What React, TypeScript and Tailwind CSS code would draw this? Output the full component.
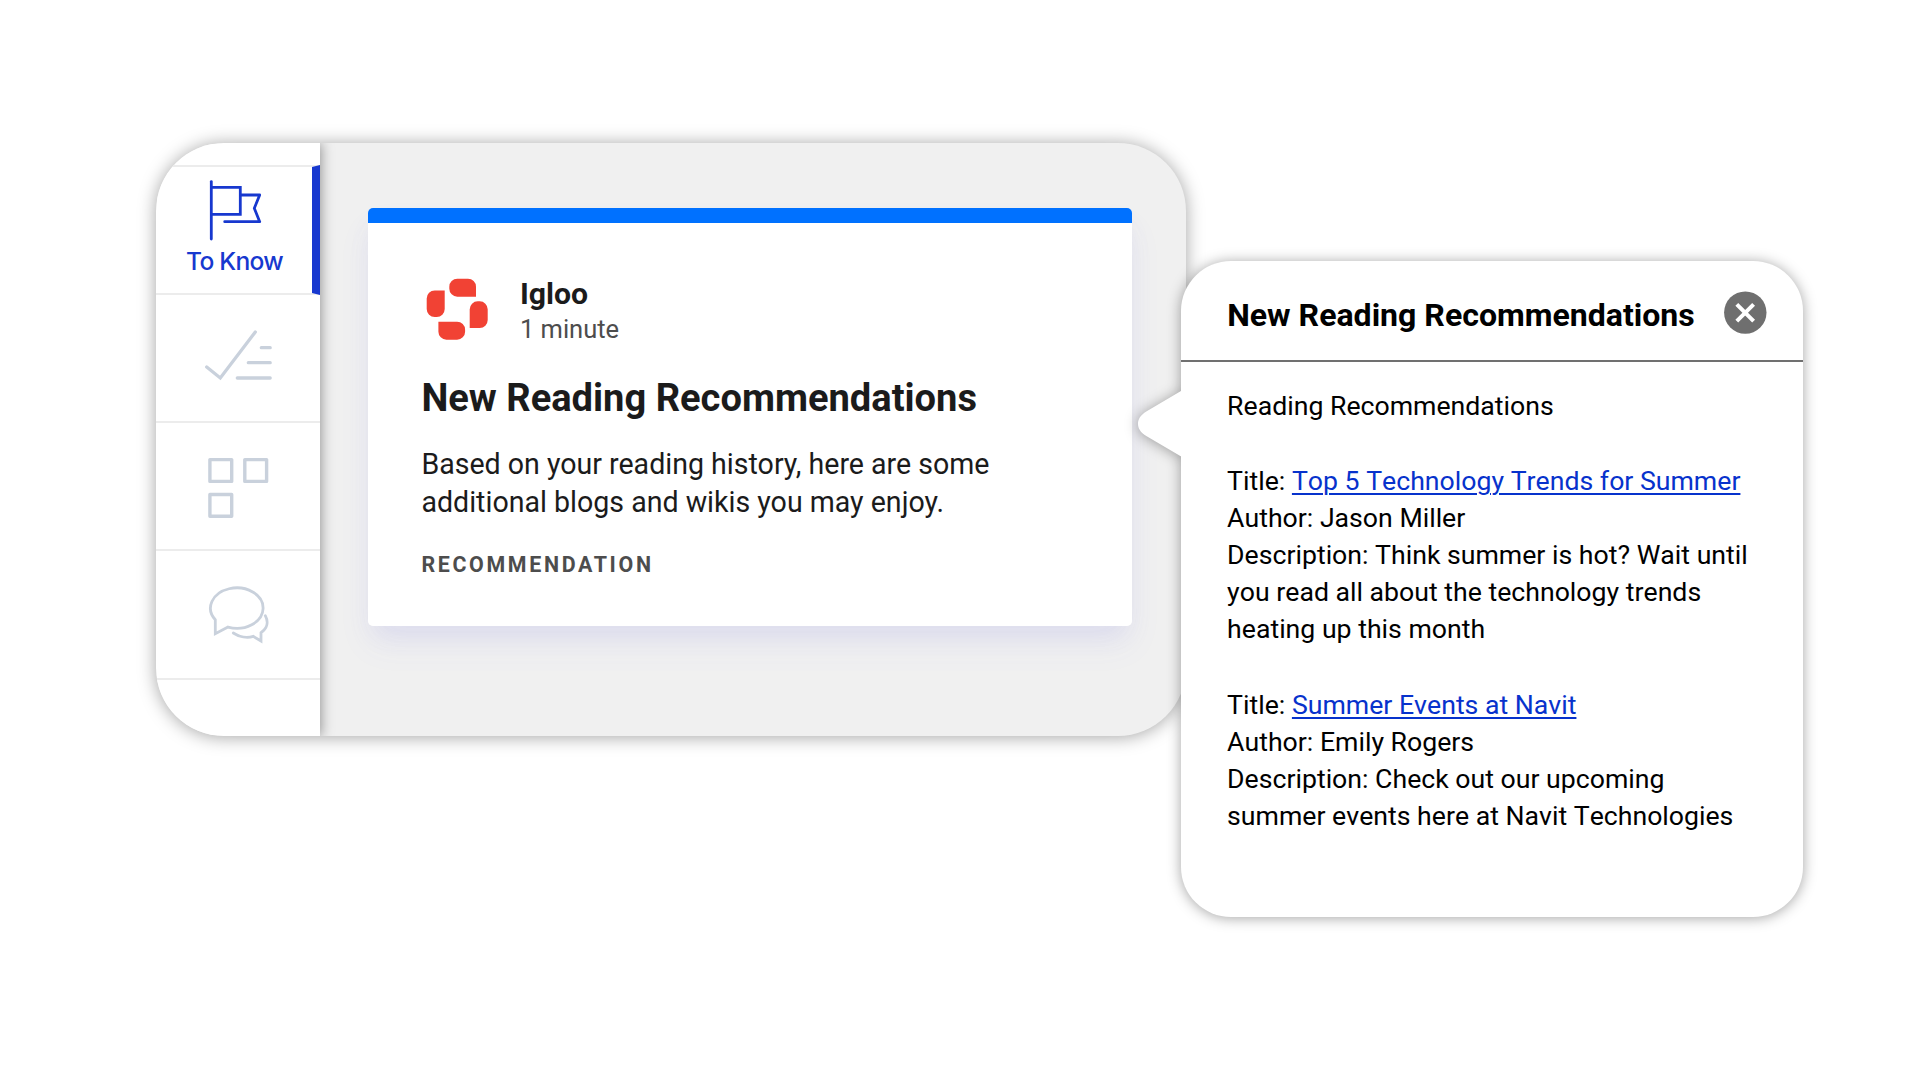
import type { ReactNode } from "react";

type TabProps = {
  children: ReactNode;
};

type RecommendationProps = {
  title: string;
  author: string;
  description: string;
};

const recommendations: RecommendationProps[] = [
  {
    title: "Top 5 Technology Trends for Summer",
    author: "Jason Miller",
    description:
      "Think summer is hot? Wait until you read all about the technology trends heating up this month",
  },
  {
    title: "Summer Events at Navit",
    author: "Emily Rogers",
    description: "Check out our upcoming summer events here at Navit Technologies",
  },
];

function FlagIcon() {
  return (
    <svg width="54" height="64" viewBox="0 0 54 64" fill="none" stroke="currentColor" strokeWidth="2.8" strokeLinecap="round">
      <path d="M3.3 3.6V61" />
      <path d="M3.3 9.3H32.3V36.3H3.3" />
      <path d="M32.3 17H51.7L46.3 30.3L51.7 43.7H16.7" strokeLinejoin="round" />
    </svg>
  );
}

function ChecklistIcon() {
  return (
    <svg width="68" height="68" viewBox="0 0 68 68" fill="none" stroke="currentColor" strokeWidth="3.3" strokeLinecap="round">
      <path d="M2.7 43L16.3 54L51.3 8" />
      <path d="M57.3 23.7H66.2M44.3 38.7H66.2M33.3 54H66.2" />
    </svg>
  );
}

function AppsIcon() {
  return (
    <svg width="68" height="68" viewBox="0 0 68 68" fill="none" stroke="currentColor" strokeWidth="3.4" strokeLinejoin="round">
      <rect x="5.9" y="7.6" width="21.8" height="21.8" />
      <rect x="40.8" y="7.6" width="21.8" height="21.8" />
      <rect x="5.9" y="42.5" width="21.8" height="21.8" />
    </svg>
  );
}

function ChatIcon() {
  return (
    <svg width="68" height="68" viewBox="0 0 68 68" fill="none" stroke="currentColor" strokeWidth="2.8" strokeLinecap="round">
      <path d="M11.3 38.7A26.3 20.2 0 1 1 24 46.1L11.3 52.7Z" />
      <path d="M61.3 34.7C64.7 41 63.3 47.4 57 51.7V60L49.3 55.4C43.3 57.4 35.3 56 29.3 52" />
    </svg>
  );
}

function IglooLogo() {
  const block =
    "M31.3 1.7H42A8 8 0 0 1 50 9.7V19.7H31.3A8 8 0 0 1 23.3 11.7V9.7A8 8 0 0 1 31.3 1.7Z";

  return (
    <svg width="62" height="64" viewBox="0 0 62 64" fill="#f14234">
      <path d={block} />
      <path d={block} transform="rotate(90 31.2 32.2)" />
      <path d={block} transform="rotate(180 31.2 32.2)" />
      <path d={block} transform="rotate(270 31.2 32.2)" />
    </svg>
  );
}

function Tab({ children }: TabProps) {
  return (
    <div className="flex h-32 items-center justify-center border-b-2 border-[#ececec] text-[#c9d1dc] last:h-[129px]">
      {children}
    </div>
  );
}

function Sidebar() {
  return (
    <div className="relative z-10 flex w-[164px] flex-col bg-white pt-[22px] shadow-[1px_0_12px_rgba(0,0,0,0.4)]">
      {/* Active tab, the thin top and bottom borders bevel the blue bar */}
      <div className="flex h-[130px] flex-col items-center border-y-2 border-r-8 border-[#ececec] border-r-[#1738cf] pt-[11px] pl-px text-[#1738cf]">
        <FlagIcon />
        <p className="mt-[3px] font-[Inter,sans-serif] text-[24.6px] leading-8 font-medium tracking-[-0.75px]">
          To Know
        </p>
      </div>
      <Tab>
        <ChecklistIcon />
      </Tab>
      <Tab>
        <AppsIcon />
      </Tab>
      <Tab>
        <ChatIcon />
      </Tab>
    </div>
  );
}

function Card() {
  return (
    <div className="h-[418px] w-[764px] overflow-hidden rounded-[5px] bg-white">
      <div className="h-[15px] bg-[#0071ff]" />
      <div className="pt-[53px] pl-[53.4px] text-[#1b1b1b]">
        <div className="flex">
          <div className="w-[98.5px] pt-px pl-[4.6px]">
            <IglooLogo />
          </div>
          <div>
            <p className="text-[30.2px] leading-9 font-bold">Igloo</p>
            <p className="text-[25.5px] leading-[34px] text-[#4d4d4d]">1 minute</p>
          </div>
        </div>
        <h1 className="mt-[29px] text-[38.1px] leading-[46px] font-bold">
          New Reading Recommendations
        </h1>
        <p className="mt-6 w-[600px] text-[28.57px] leading-[38px]">
          Based on your reading history, here are some additional blogs and wikis you may enjoy.
        </p>
        <p className="mt-[31px] text-[21.4px] leading-[26px] font-bold tracking-[2.65px] text-[#4d4d4d]">
          RECOMMENDATION
        </p>
      </div>
    </div>
  );
}

function Recommendation({ title, author, description }: RecommendationProps) {
  return (
    <div>
      <p>
        Title:{" "}
        <a href="#" className="text-[#0732cc] underline decoration-2 underline-offset-[3px]">
          {title}
        </a>
      </p>
      <p>Author: {author}</p>
      <p>Description: {description}</p>
    </div>
  );
}

function Popover() {
  return (
    <div className="relative z-20 mt-[118px] -ml-[5px] h-[656px] w-[622px] rounded-[50px] bg-white drop-shadow-[0_1px_7px_rgba(0,0,0,0.36)]">
      <svg className="absolute top-[130px] -left-[43px]" width="44" height="66" viewBox="0 0 44 66" fill="#fff">
        <path d="M44 -0.6L8.7 20.3C1.8 24.4 0 29 0 32.8C0 37 2 41.4 8.7 45.3L44 66Z" />
      </svg>
      <div className="flex h-[101px] items-start border-b-2 border-[#707070] pl-[46.2px]">
        <h2 className="w-[496.8px] pt-[34px] text-[32.05px] leading-10 font-bold whitespace-nowrap">
          New Reading Recommendations
        </h2>
        <svg className="mt-[30px]" width="43" height="43" viewBox="0 0 43 43">
          <circle cx="21.3" cy="21.6" r="21.2" fill="#6f6f6f" />
          <path d="M12.8 13.3L29.6 30.1M29.6 13.3L12.8 30.1" stroke="#fff" strokeWidth="4" />
        </svg>
      </div>
      <div className="pt-[26px] pr-10 pl-[46.1px] text-[26.67px] leading-[37px] [font-kerning:none]">
        <p>Reading Recommendations</p>
        <div className="mt-[38px] flex flex-col gap-[39px]">
          {recommendations.map((item) => (
            <Recommendation key={item.title} {...item} />
          ))}
        </div>
      </div>
    </div>
  );
}

export default function App() {
  return (
    <div className="flex h-[1080px] w-[1920px] items-start overflow-hidden bg-white pt-[143px] pl-[156px] font-[Roboto,sans-serif] text-black">
      <div className="flex h-[593px] w-[1030px] shrink-0 overflow-hidden rounded-[68px] bg-[#f0f0f0] shadow-[0_1px_18px_rgba(0,0,0,0.36)]">
        <Sidebar />
        <div className="flex-1 pt-[65px] pl-12">
          <div className="w-[764px] rounded-[5px] shadow-[0_20px_36px_rgba(100,100,230,0.05),0_14px_24px_-6px_rgba(100,100,230,0.1)]">
            <Card />
          </div>
        </div>
      </div>
      <Popover />
    </div>
  );
}
